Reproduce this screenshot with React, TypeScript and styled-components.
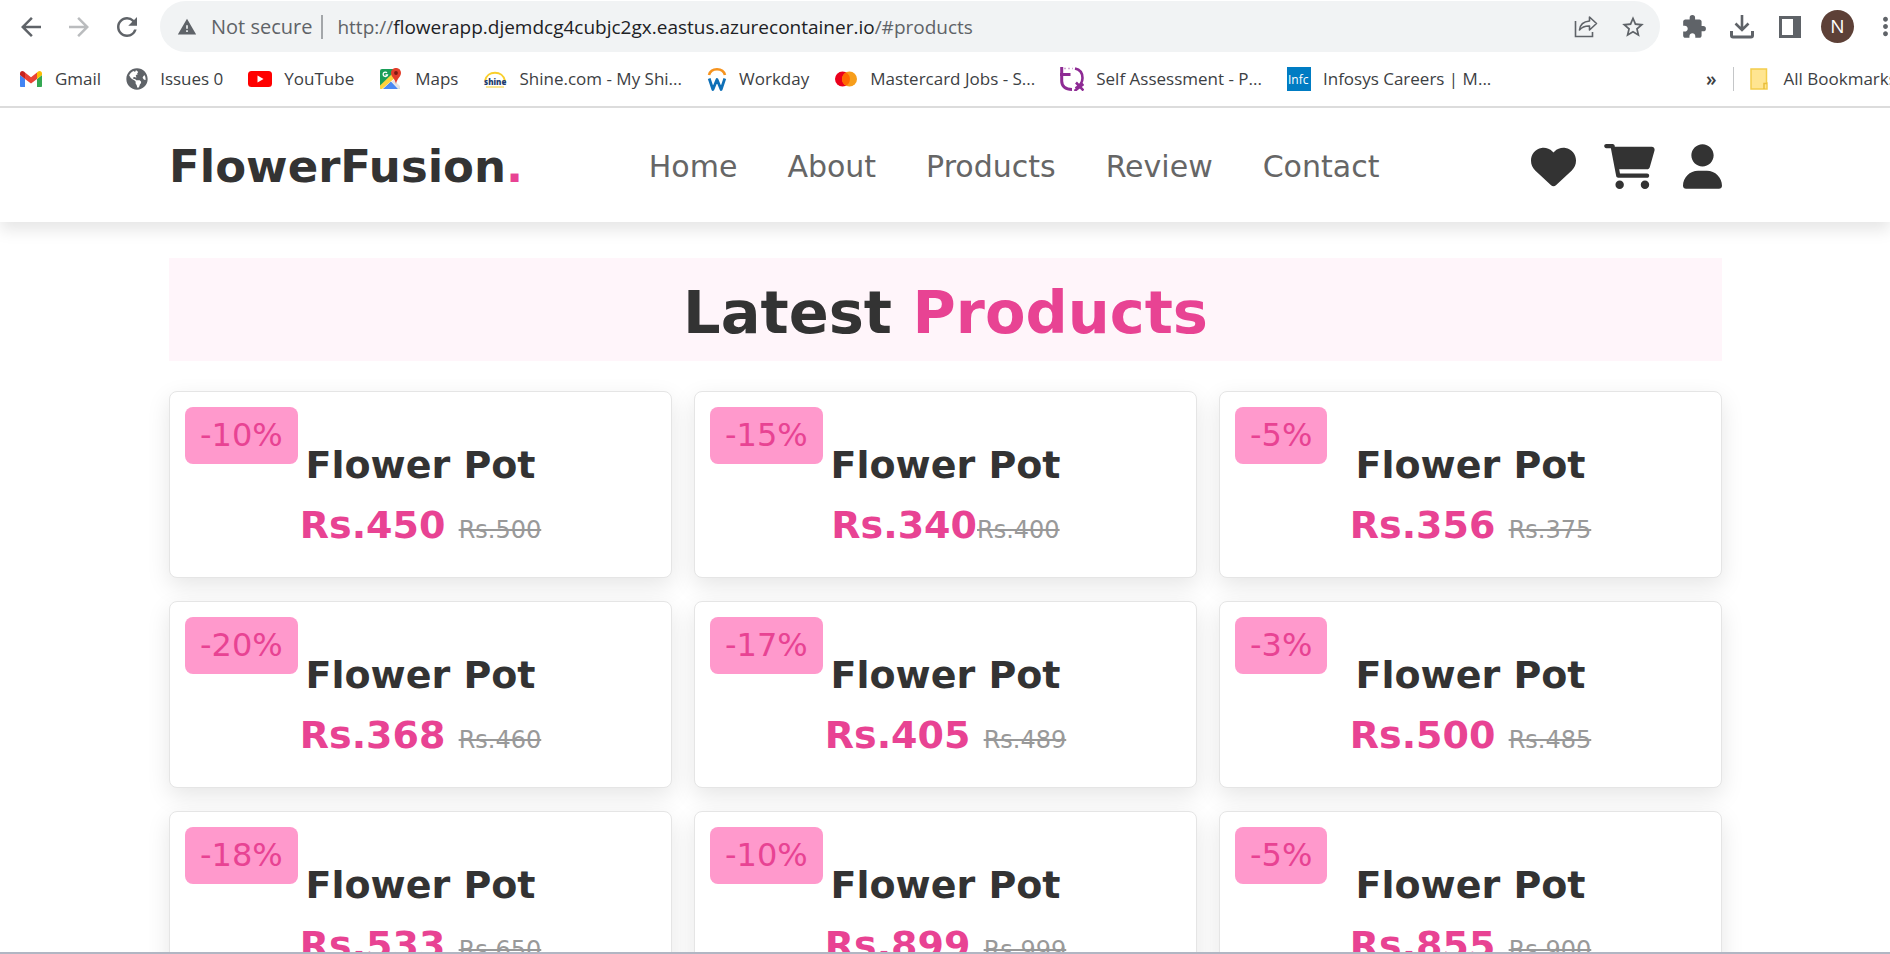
import React from "react";
import styled, { createGlobalStyle, css } from "styled-components";
import {
  MdArrowBack,
  MdArrowForward,
  MdExtension,
  MdMoreVert,
  MdRefresh,
  MdStarBorder,
  MdWarning,
} from "react-icons/md";
import { FaGlobeAmericas } from "react-icons/fa";

const GlobalStyle = createGlobalStyle`
  *, *::before, *::after { box-sizing: border-box; }
  body { margin: 0; background: #fff; overflow: hidden; }
  h1, h2, h3, p, ul { margin: 0; padding: 0; }
  ul { list-style: none; }
  a { color: inherit; text-decoration: none; }
  button { border: 0; padding: 0; background: none; color: inherit; font: inherit; cursor: pointer; }
`;

const uiFont = css`
  font-family: "Open Sans", "Noto Sans", sans-serif;
`;

const Window = styled.div`
  height: 100vh;
  display: flex;
  flex-direction: column;
  overflow: hidden;
  font-family: Verdana, "DejaVu Sans", sans-serif;
  border-bottom: 2px solid #b1b6c3;
`;

/* ---------- browser chrome ---------- */

const Chrome = styled.div`
  ${uiFont}
  flex: none;
  background: #fff;
  border-bottom: 2px solid #dcdcdc;
  color: #3c4043;
`;

const Toolbar = styled.div`
  display: flex;
  align-items: center;
  height: 52px;
  padding-top: 1px;
  color: #5f6368;
`;

const NavButtons = styled.div`
  flex: none;
  display: flex;
  gap: 18px;
  padding: 0 18px 0 16px;
`;

const ToolButton = styled.button<{ $faded?: boolean }>`
  display: flex;
  flex: none;
  justify-content: center;
  color: ${(p) => (p.$faded ? "#babcbe" : "#5f6368")};
  svg {
    display: block;
  }
`;

const AddressBar = styled.div`
  flex: 1;
  min-width: 0;
  display: flex;
  align-items: center;
  height: 51px;
  padding: 0 14px 0 17px;
  border-radius: 26px;
  background: #f1f3f4;
`;

const Security = styled.button`
  display: flex;
  align-items: center;
  gap: 14px;
  padding-right: 9px;
  font-size: 20px;
  white-space: nowrap;
`;

const Url = styled.div`
  flex: 1;
  min-width: 0;
  padding-left: 14px;
  overflow: hidden;
  font-size: 19px;
  white-space: nowrap;
  strong {
    font-weight: 400;
    color: #202124;
  }
`;

const Rule = styled.span<{ $light?: boolean }>`
  flex: none;
  width: ${(p) => (p.$light ? 1 : 2)}px;
  height: 24px;
  background: ${(p) => (p.$light ? "#c4c6c8" : "#a3a6a9")};
`;

const AddressActions = styled.div`
  display: flex;
  align-items: center;
  gap: 22px;
`;

const ToolActions = styled.div`
  flex: none;
  display: flex;
  align-items: center;
  gap: 15px;
  width: 230px;
  padding-left: 17px;
  overflow: hidden;
  > button {
    width: 33px;
  }
`;

const Avatar = styled.button`
  flex: none;
  height: 33px;
  border-radius: 50%;
  background: #5d4037;
  color: #fff;
  font-size: 19px;
  line-height: 33px;
  text-align: center;
`;

const Bookmarks = styled.nav`
  display: flex;
  align-items: center;
  height: 54px;
  padding-left: 19px;
  font-size: 17px;
  overflow: hidden;
`;

const BookmarkList = styled.ul`
  flex: 1;
  display: flex;
  gap: 25px;
`;

const Bookmark = styled.a`
  display: flex;
  align-items: center;
  gap: 12px;
  white-space: nowrap;
  line-height: 24px;
  svg {
    flex: none;
    display: block;
  }
`;

const BookmarkEnd = styled.div`
  flex: none;
  display: flex;
  align-items: center;
  width: 184px;
  gap: 16px;
`;

const More = styled.button`
  font-size: 19px;
  font-weight: 600;
  line-height: 24px;
`;

/* ---------- shop page ---------- */

const Page = styled.div`
  flex: 1;
  min-height: 0;
  overflow: hidden;
`;

const Header = styled.header`
  position: relative;
  display: flex;
  align-items: center;
  justify-content: space-between;
  height: 114px;
  padding: 2px 168px 0 169px;
  background: #fff;
  box-shadow: 0 8px 15px rgba(0, 0, 0, 0.1);
`;

const Logo = styled.a`
  font-size: 45px;
  font-weight: 700;
  color: #333;
  span {
    color: #e84393;
  }
`;

const Menu = styled.nav`
  display: flex;
  gap: 50px;
  font-size: 30px;
  color: #666;
`;

const HeaderIcons = styled.div`
  display: flex;
  gap: 28px;
  padding-left: 26px;
  color: #333;
`;

const Products = styled.section`
  padding: 36px 168px 36px 169px;
`;

const Heading = styled.h1`
  margin-bottom: 30px;
  padding: 19px 16px 13px;
  background: #fff5fa;
  color: #333;
  font-size: 59px;
  line-height: 71px;
  text-align: center;
  span {
    color: #e84393;
  }
`;

const Grid = styled.div`
  display: grid;
  grid-template-columns: repeat(3, 1fr);
  gap: 23px 22px;
`;

const Card = styled.article`
  position: relative;
  padding: 43px 0 22px;
  border: 1px solid #e5e5e5;
  border-radius: 8px;
  background: #fff;
  box-shadow: 0 8px 23px rgba(0, 0, 0, 0.1);
  text-align: center;
`;

const Discount = styled.span`
  position: absolute;
  top: 15px;
  left: 15px;
  padding: 0 15px;
  border-radius: 8px;
  background: #ff99cc;
  color: #e84393;
  font-size: 32px;
  line-height: 57px;
`;

const Name = styled.h3`
  color: #333;
  font-size: 38px;
  line-height: 60px;
`;

const Price = styled.p`
  color: #e84393;
  font-size: 38px;
  font-weight: 700;
  line-height: 60px;
  del {
    color: #999;
    font-size: 24px;
    font-weight: 400;
    line-height: 1;
  }
`;

/* ---------- icons ---------- */

const HeartIcon = () => (
  <svg width="45" height="45" viewBox="0 0 512 512" fill="currentColor" display="block">
    <path d="M0 190.9V185.1C0 115.2 50.52 55.58 119.4 44.1C164.1 36.51 211.4 51.37 244 84.02L256 96L267.1 84.02C300.6 51.37 347 36.51 392.6 44.1C461.5 55.58 512 115.2 512 185.1V190.9C512 232.4 494.8 272.1 464.4 300.4L283.7 469.1C276.2 476.1 266.3 480 256 480C245.7 480 235.8 476.1 228.3 469.1L47.59 300.4C17.23 272.1 0 232.4 0 190.9z" />
  </svg>
);

const CartIcon = () => (
  <svg width="51" height="45" viewBox="0 0 576 512" fill="currentColor" display="block">
    <path d="M96 0C107.5 0 117.4 8.19 119.6 19.51L121.1 32H541.8C562.1 32 578.3 52.25 572.6 72.66L518.6 264.7C514.7 278.5 502.1 288 487.8 288H170.7L179.9 336H488C501.3 336 512 346.7 512 360C512 373.3 501.3 384 488 384H159.1C148.5 384 138.6 375.8 136.4 364.5L76.14 48H24C10.75 48 0 37.25 0 24C0 10.75 10.75 0 24 0H96zM128 464C128 437.5 149.5 416 176 416C202.5 416 224 437.5 224 464C224 490.5 202.5 512 176 512C149.5 512 128 490.5 128 464zM512 464C512 490.5 490.5 512 464 512C437.5 512 416 490.5 416 464C416 437.5 437.5 416 464 416C490.5 416 512 437.5 512 464z" />
  </svg>
);

const UserIcon = () => (
  <svg width="39" height="45" viewBox="0 0 448 512" fill="currentColor" display="block">
    <path d="M224 256c70.7 0 128-57.31 128-128s-57.3-128-128-128C153.3 0 96 57.31 96 128S153.3 256 224 256zM274.7 304H173.3C77.61 304 0 381.6 0 477.3c0 19.14 15.52 34.67 34.66 34.67h378.7C432.5 512 448 496.5 448 477.3C448 381.6 370.4 304 274.7 304z" />
  </svg>
);

const GmailIcon = () => (
  <svg width="24" height="24" viewBox="0 0 24 24">
    <path fill="#4285f4" d="M1 20V8l5 4v8H2.500C1.700 20 1 20 1 19z" />
    <path fill="#34a853" d="M18 20v-8l5-4v11c0 .6-.4 1-1 1z" />
    <path fill="#ea4335" d="M6 5.500l6 4.700 6-4.700V12l-6 4.600L6 12z" />
    <path fill="#c5221f" d="M1 8V6.300C1 4.200 3.300 3.200 4.900 4.500L6 5.500V12z" />
    <path fill="#fbbc04" d="M18 5.500l1.100-1C20.700 3.200 23 4.200 23 6.300V8l-5 4z" />
  </svg>
);

const YouTubeIcon = () => (
  <svg width="24" height="24" viewBox="0 0 24 24">
    <rect y="4" width="24" height="16" rx="3.500" fill="#f00" />
    <path fill="#fff" d="M9.500 8.500v7l6-3.500z" />
  </svg>
);

const MapsIcon = () => (
  <svg width="24" height="24" viewBox="0 0 24 24">
    <rect x="1" y="2" width="20" height="20" rx="2" fill="#1a9e58" />
    <path fill="#fff" d="M19 3L1.500 20.500 3 22h16l2-2V8z" />
    <path fill="#4a89f3" d="M4 22l8-7.500 7 7.500z" />
    <path fill="#fdd23c" d="M1 18.500L14 6l2.500 4.500L3 22H2.500C1.500 22 1 21.500 1 20.500z" />
    <path fill="#4a89f3" d="M4.500 22l7.500-7 6.500 7z" />
    <path fill="#e4e4e4" d="M14.500 13l6.500 6v1.500c0 1-.5 1.500-1.500 1.500L12.500 15z" />
    <path fill="none" stroke="#fff" strokeWidth="1.300" d="M8 5.800a2.200 2.200 0 1 0 .5 2H6.500" />
    <path
      fill="#e33e2b"
      d="M17 1c-3 0-5 2.200-5 5 0 3.800 4 5.500 5 11 1-5.500 5-7.200 5-11 0-2.800-2-5-5-5z"
    />
    <circle cx="17" cy="6" r="1.900" fill="#7c1a12" />
  </svg>
);

const ShineIcon = () => (
  <svg width="24" height="24" viewBox="0 0 24 24">
    <path fill="none" stroke="#f9cf2c" strokeWidth="2" d="M2 14C4 3 20 3 22 14" />
    <path stroke="#f9cf2c" strokeWidth="2" d="M3 20h18" opacity="0.5" />
    <text x="1" y="18" fontFamily="Open Sans" fontSize="8" fontWeight="800" fill="#1d3c6e">
      shine
    </text>
  </svg>
);

const WorkdayIcon = () => (
  <svg width="20" height="24" viewBox="2 0 20 24">
    <path fill="none" stroke="#f6931e" strokeWidth="2.600" d="M4 8C6 .3 18 .3 20 8" />
    <path
      fill="none"
      stroke="#0f70b7"
      strokeWidth="2.800"
      strokeLinejoin="round"
      d="M4.200 11.500l3.700 11L12 12.500l4.100 10 3.700-11"
    />
  </svg>
);

const MastercardIcon = () => (
  <svg width="24" height="24" viewBox="0 0 24 24">
    <circle cx="8.500" cy="12" r="7.500" fill="#eb001b" />
    <circle cx="15.500" cy="12" r="7.500" fill="#f79e1b" />
    <path fill="#ff6a00" d="M12 5.400a7.500 7.500 0 0 1 0 13.200 7.500 7.500 0 0 1 0-13.200z" />
  </svg>
);

const AssessmentIcon = () => (
  <svg width="24" height="24" viewBox="0 0 24 24" fill="none" stroke="#8e2b94">
    <path strokeWidth="3" d="M1.700 0v14c0 5 3.500 8.500 10.300 8.500M0 7.500h10.500" />
    <path strokeWidth="2.600" d="M15 1.500c5 1 7.500 5 7.500 9.500 0 4.500-2.500 8-7 10.500M16 15.500l7.500 8M23.500 17l-9 7" />
    <path strokeWidth="1.500" strokeDasharray="2 2" d="M4 1.500h9" opacity="0.400" />
  </svg>
);

const InfosysIcon = () => (
  <svg width="24" height="24" viewBox="0 0 24 24">
    <rect width="24" height="24" fill="#007cc3" />
    <text x="1" y="17" fontFamily="Open Sans" fontSize="12" fill="#fff">
      Infc
    </text>
  </svg>
);

const FolderIcon = () => (
  <svg width="22" height="22" viewBox="0 0 22 22">
    <path
      d="M1 1h15.500v14H17v6H1z"
      fill="#ffe591"
      stroke="#f3cd4c"
      strokeWidth="1.500"
    />
    <path d="M14 21v-5.500h3" fill="none" stroke="#e9bf3b" strokeWidth="1.500" />
  </svg>
);

const ShareIcon = () => (
  <svg width="24" height="24" viewBox="0 0 24 24" fill="none" stroke="#5f6368" strokeWidth="1.600">
    <path d="M1.500 6v15.500h17V17" />
    <path strokeLinejoin="round" d="M15.500 2l7 6.500-7 6.500v-4C11 10.800 8 12 5.500 15 6 10 9.500 6.500 15.500 6z" />
  </svg>
);

const DownloadIcon = () => (
  <svg width="24" height="24" viewBox="0 0 24 24" fill="none" stroke="#5f6368" strokeWidth="3">
    <path d="M12 0v14M5.500 8.500L12 15l6.500-6.500" strokeWidth="2.600" />
    <path d="M1.500 16v4.500c0 1 .5 1.500 1.500 1.500h18c1 0 1.500-.5 1.500-1.500V16" />
  </svg>
);

const PanelIcon = () => (
  <svg width="22" height="22" viewBox="0 0 22 22">
    <path fill="#5f6368" fillRule="evenodd" d="M0 0h22v22H0zM3 3v16h11V3z" />
  </svg>
);

/* ---------- data ---------- */

const bookmarks: { label: string; icon: React.ReactNode }[] = [
  { label: "Gmail", icon: <GmailIcon /> },
  { label: "Issues 0", icon: <FaGlobeAmericas size={22} color="#5f6368" /> },
  { label: "YouTube", icon: <YouTubeIcon /> },
  { label: "Maps", icon: <MapsIcon /> },
  { label: "Shine.com - My Shi...", icon: <ShineIcon /> },
  { label: "Workday", icon: <WorkdayIcon /> },
  { label: "Mastercard Jobs - S...", icon: <MastercardIcon /> },
  { label: "Self Assessment - P...", icon: <AssessmentIcon /> },
  { label: "Infosys Careers | M...", icon: <InfosysIcon /> },
];

const menu = ["Home", "About", "Products", "Review", "Contact"];

const products = [
  { off: 10, price: "Rs.450 ", was: "Rs.500" },
  { off: 15, price: "Rs.340", was: "Rs.400" },
  { off: 5, price: "Rs.356 ", was: "Rs.375" },
  { off: 20, price: "Rs.368 ", was: "Rs.460" },
  { off: 17, price: "Rs.405 ", was: "Rs.489" },
  { off: 3, price: "Rs.500 ", was: "Rs.485" },
  { off: 18, price: "Rs.533 ", was: "Rs.650" },
  { off: 10, price: "Rs.899 ", was: "Rs.999" },
  { off: 5, price: "Rs.855 ", was: "Rs.900" },
];

export default function App() {
  return (
    <Window>
      <GlobalStyle />
      <Chrome>
        <Toolbar>
          <NavButtons>
            <ToolButton aria-label="Back">
              <MdArrowBack size={30} />
            </ToolButton>
            <ToolButton aria-label="Forward" $faded>
              <MdArrowForward size={30} />
            </ToolButton>
            <ToolButton aria-label="Reload">
              <MdRefresh size={30} />
            </ToolButton>
          </NavButtons>
          <AddressBar>
            <Security>
              <MdWarning size={20} />
              Not secure
            </Security>
            <Rule />
            <Url>
              http://<strong>flowerapp.djemdcg4cubjc2gx.eastus.azurecontainer.io</strong>/#products
            </Url>
            <AddressActions>
              <ToolButton aria-label="Share">
                <ShareIcon />
              </ToolButton>
              <ToolButton aria-label="Bookmark this page">
                <MdStarBorder size={26} />
              </ToolButton>
            </AddressActions>
          </AddressBar>
          <ToolActions>
            <ToolButton aria-label="Extensions">
              <MdExtension size={26} />
            </ToolButton>
            <ToolButton aria-label="Downloads">
              <DownloadIcon />
            </ToolButton>
            <ToolButton aria-label="Side panel">
              <PanelIcon />
            </ToolButton>
            <Avatar>N</Avatar>
            <ToolButton aria-label="Menu">
              <MdMoreVert size={29} />
            </ToolButton>
          </ToolActions>
        </Toolbar>
        <Bookmarks>
          <BookmarkList>
            {bookmarks.map((b) => (
              <li key={b.label}>
                <Bookmark href="#">
                  {b.icon}
                  {b.label}
                </Bookmark>
              </li>
            ))}
          </BookmarkList>
          <BookmarkEnd>
            <More aria-label="More bookmarks">»</More>
            <Rule $light />
            <Bookmark href="#">
              <FolderIcon />
              All Bookmarks
            </Bookmark>
          </BookmarkEnd>
        </Bookmarks>
      </Chrome>

      <Page>
        <Header>
          <Logo href="#">
            FlowerFusion<span>.</span>
          </Logo>
          <Menu>
            {menu.map((m) => (
              <a key={m} href={`#${m.toLowerCase()}`}>
                {m}
              </a>
            ))}
          </Menu>
          <HeaderIcons>
            <a href="#" aria-label="Wishlist">
              <HeartIcon />
            </a>
            <a href="#" aria-label="Cart">
              <CartIcon />
            </a>
            <a href="#" aria-label="Account">
              <UserIcon />
            </a>
          </HeaderIcons>
        </Header>
        <Products id="products">
          <Heading>
            Latest <span>Products</span>
          </Heading>
          <Grid>
            {products.map((p, i) => (
              <Card key={i}>
                <Discount>-{p.off}%</Discount>
                <Name>Flower Pot</Name>
                <Price>
                  {p.price}
                  <del>{p.was}</del>
                </Price>
              </Card>
            ))}
          </Grid>
        </Products>
      </Page>
    </Window>
  );
}
